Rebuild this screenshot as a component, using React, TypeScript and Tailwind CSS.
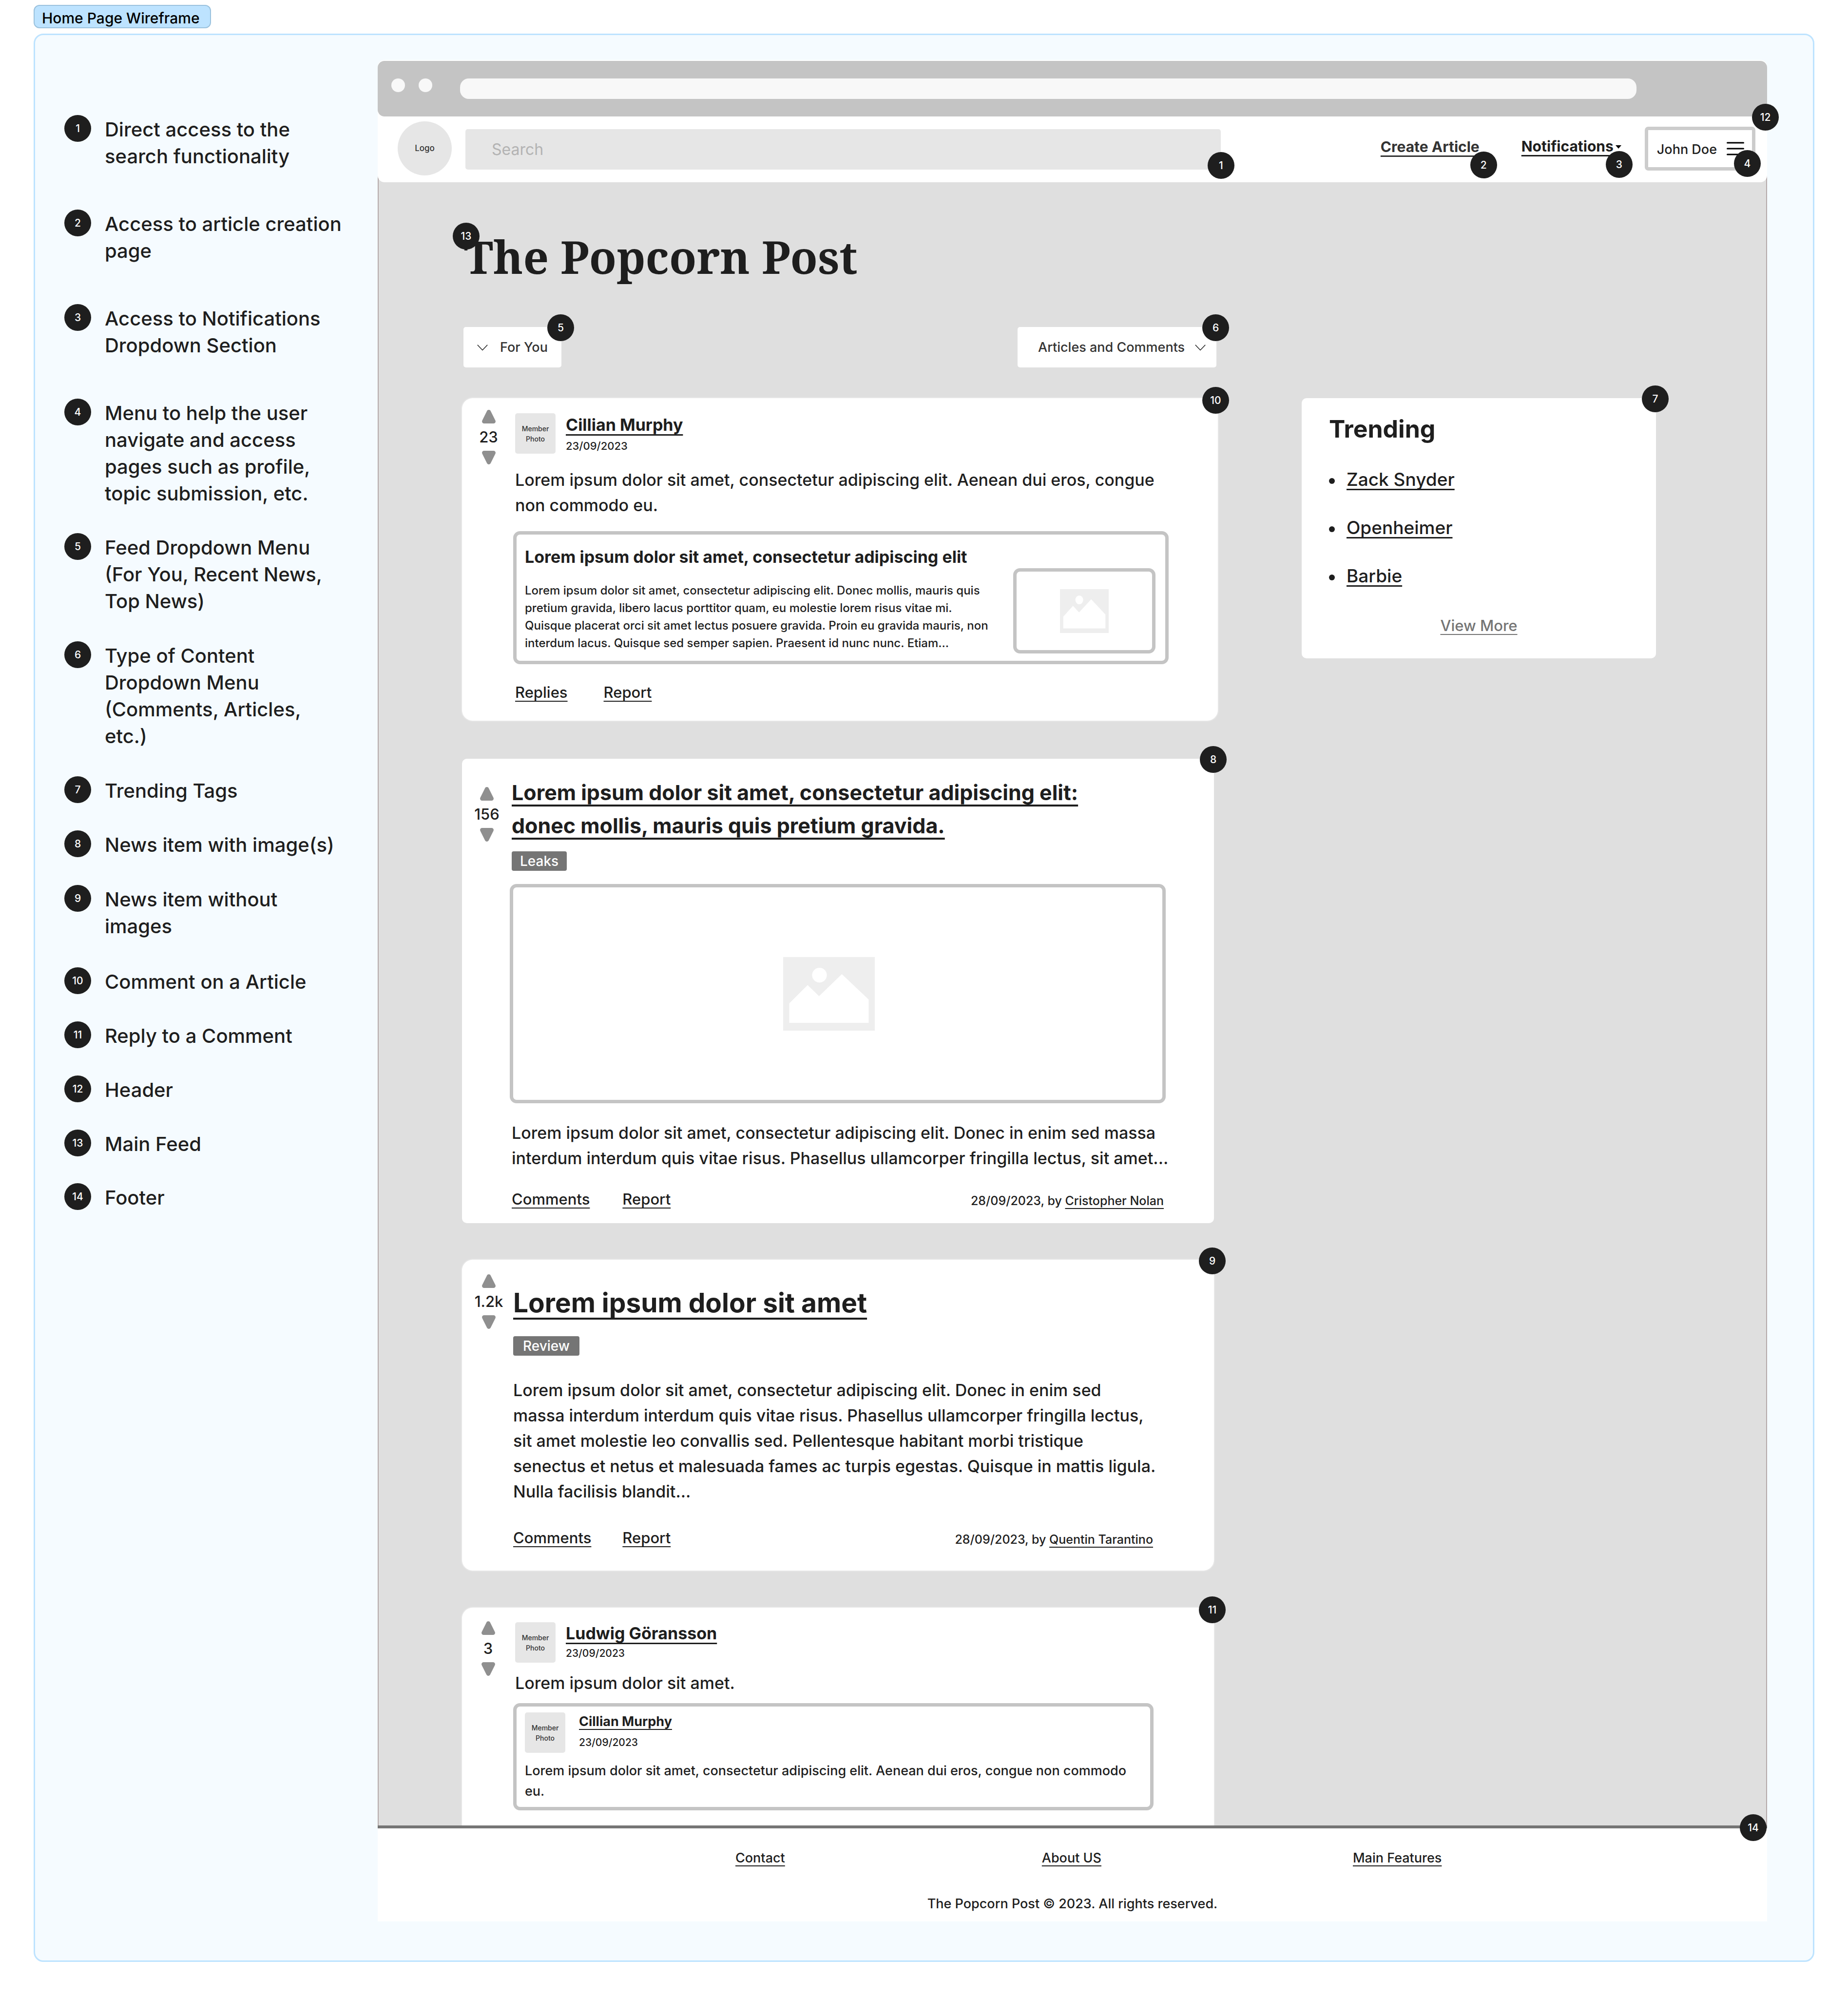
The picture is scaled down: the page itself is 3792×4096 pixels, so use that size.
import React from "react";

const underlined = "underline [text-decoration-skip-ink:none]";

function Badge({ n, className = "" }: { n: number; className?: string }) {
  return (
    <span
      className={`z-20 flex size-[55px] shrink-0 items-center justify-center rounded-full bg-[#1e1e1e] text-[21px] leading-none font-medium text-white ${className}`}
    >
      {n}
    </span>
  );
}

const legend = [
  { text: "Direct access to the search functionality", gap: "" },
  { text: "Access to article creation page", gap: "mt-[84px]" },
  { text: "Access to Notifications Dropdown Section", gap: "mt-[84px]" },
  { text: "Menu to help the user navigate and access pages such as profile, topic submission, etc.", gap: "mt-[84px]" },
  { text: "Feed Dropdown Menu (For You, Recent News, Top News)", gap: "mt-[56px]" },
  { text: "Type of Content Dropdown Menu (Comments, Articles, etc.)", gap: "mt-[57px]" },
  { text: "Trending Tags", gap: "mt-[57px]" },
  { text: "News item with image(s)", gap: "mt-[56px]" },
  { text: "News item without images", gap: "mt-[57px]" },
  { text: "Comment on a Article", gap: "mt-[59px]" },
  { text: "Reply to a Comment", gap: "mt-[56px]" },
  { text: "Header", gap: "mt-[56px]" },
  { text: "Main Feed", gap: "mt-[56px]" },
  { text: "Footer", gap: "mt-[55px]" },
];

function Legend() {
  return (
    <aside className="w-[703px] shrink-0 pt-[113px] pr-[70px] pl-[60px]">
      <ol>
        {legend.map((item, i) => (
          <li key={item.text} className={`flex gap-[28px] ${item.gap}`}>
            <Badge n={i + 1} />
            <p className="-mb-[2px] flex-1 pt-[2px] text-[40px] leading-[55px]">{item.text}</p>
          </li>
        ))}
      </ol>
    </aside>
  );
}

function Chevron({ className }: { className: string }) {
  return (
    <svg viewBox="0 0 22 13" className={`pointer-events-none absolute h-[13px] w-[22px] ${className}`} fill="none" stroke="#1e1e1e" strokeWidth="1.5">
      <path d="M0.8 0.8 L11 11.5 L21.2 0.8" />
    </svg>
  );
}

function Votes({ count, className }: { count: string; className: string }) {
  return (
    <div className={`flex shrink-0 flex-col items-center ${className}`}>
      <button aria-label="Upvote" className="block size-[28px]">
        <svg viewBox="0 0 28 28" className="size-full" fill="#8f8f8f">
          <path d="M10.2 2.4C11.7 -0.7 16.3 -0.7 17.8 2.4L27.4 21.8C28.9 24.9 27 28 23.6 28H4.4C1 28 -0.9 24.9 0.6 21.8Z" />
        </svg>
      </button>
      <span className="text-[31px] leading-[56px]">{count}</span>
      <button aria-label="Downvote" className="block size-[28px]">
        <svg viewBox="0 0 28 28" className="size-full rotate-180" fill="#8f8f8f">
          <path d="M10.2 2.4C11.7 -0.7 16.3 -0.7 17.8 2.4L27.4 21.8C28.9 24.9 27 28 23.6 28H4.4C1 28 -0.9 24.9 0.6 21.8Z" />
        </svg>
      </button>
    </div>
  );
}

function Picture({ className }: { className: string }) {
  return (
    <svg viewBox="0 0 217 175" preserveAspectRatio="none" className={className} role="img" aria-label="Image placeholder">
      <rect width="217" height="175" fill="#eeeeee" />
      <circle cx="86" cy="43" r="17.5" fill="#ffffff" />
      <path d="M14.5 110L58 66.5L85 93L139 40.5L202.5 101V156.5H14.5Z" fill="#ffffff" />
    </svg>
  );
}

function Avatar() {
  return (
    <div className="flex size-[83px] shrink-0 items-center justify-center rounded-[5px] bg-[#e6e6e6] text-center text-[14px] leading-[21px] text-[#333333]">
      <span>
        Member
        <br />
        Photo
      </span>
    </div>
  );
}

function Tag({ children, className }: { children: string; className: string }) {
  return (
    <span className={`block h-[40px] w-fit rounded-[4px] bg-[#757575] text-[28px] leading-[40px] text-white ${className}`}>
      {children}
    </span>
  );
}

function TextLink({ children, className = "" }: { children: string; className?: string }) {
  return (
    <a href="#" className={`decoration-[2px] underline-offset-[6px] ${underlined} ${className}`}>
      {children}
    </a>
  );
}

function Byline({ date, author }: { date: string; author: string }) {
  return (
    <span className="ml-auto pt-[6px] text-[25px] leading-[34px]">
      {date}, by <TextLink>{author}</TextLink>
    </span>
  );
}

function Chrome() {
  return (
    <div className="flex h-[114px] rounded-[14px] bg-[#c4c4c4] pt-[36px] pr-[268px] pl-[28px]">
      <span className="mr-[28px] size-[28px] rounded-full bg-[#f8f8f8]" />
      <span className="mr-[57px] size-[28px] rounded-full bg-[#f8f8f8]" />
      <span className="h-[42px] flex-1 rounded-[18px] bg-[#f8f8f8]" />
    </div>
  );
}

function Header() {
  return (
    <header className="relative z-10 flex h-[135px] items-start rounded-b-[14px] bg-white pr-[24px] pl-[41px]">
      <a href="#" className="mt-[10px] flex size-[111px] items-center justify-center rounded-full bg-[#e6e6e6] text-[17px] text-[#333333]">
        Logo
      </a>
      <div className="relative mt-[26px] ml-[28px] flex-1">
        <input
          type="search"
          aria-label="Search"
          placeholder="Search"
          className="h-[83px] w-full rounded-[5px] bg-[#e6e6e6] pl-[54px] text-[32px] font-normal placeholder:text-[#b3b3b3]"
        />
        <Badge n={1} className="absolute top-[47px] -right-[28px]" />
      </div>
      <a href="#" className={`relative mt-[42px] ml-[328px] text-[30px] leading-[40px] font-bold text-[#333333] decoration-[3px] underline-offset-[7px] ${underlined}`}>
        Create Article
        <Badge n={2} className="absolute top-[30px] -right-[36px]" />
      </a>
      <button className="relative mt-[41px] ml-[86px] flex text-[30px] leading-[40px] font-bold">
        <span className={`decoration-[3px] underline-offset-[7px] ${underlined}`}>Notifications</span>
        <svg viewBox="0 0 12 7" className="mt-[18px] ml-[4px] h-[7px] w-[12px]">
          <path d="M0 0H12L6 7Z" />
        </svg>
        <Badge n={3} className="absolute top-[30px] -right-[23px]" />
      </button>
      <button className="relative mt-[21px] ml-[48px] flex h-[90px] items-center gap-[20px] rounded-[7px] border-[7px] border-[#cccccc] pr-[16px] pl-[18px]">
        <span className="pt-[4px] text-[27px] leading-[36px]">John Doe</span>
        <svg viewBox="0 0 36 28" className="h-[28px] w-[36px]" stroke="#000000" strokeWidth="3" strokeLinecap="round">
          <path d="M1.5 2H34.5M1.5 14H34.5M1.5 26H34.5" />
        </svg>
        <Badge n={4} className="absolute top-[41px] -right-[18px]" />
      </button>
      <Badge n={12} className="absolute -top-[26px] -right-[24px]" />
    </header>
  );
}

function Filters() {
  return (
    <div className="mx-[3px] mt-[74px] flex justify-between text-[27px] text-[#333333]">
      <div className="relative">
        <select aria-label="Feed" className="h-[83px] w-[201px] appearance-none rounded-[5px] bg-white pt-[2px] pl-[75px]">
          <option>For You</option>
          <option>Recent News</option>
          <option>Top News</option>
        </select>
        <Chevron className="top-[36px] left-[28px]" />
        <Badge n={5} className="absolute -top-[26px] -right-[26px]" />
      </div>
      <div className="relative">
        <select aria-label="Type of content" className="h-[83px] w-[408px] appearance-none rounded-[5px] bg-white pt-[2px] pl-[42px]">
          <option>Articles and Comments</option>
          <option>Articles</option>
          <option>Comments</option>
        </select>
        <Chevron className="top-[36px] right-[22px]" />
        <Badge n={6} className="absolute -top-[26px] -right-[26px]" />
      </div>
    </div>
  );
}

function CommentCard() {
  return (
    <article className="relative mt-[63px] flex rounded-[22px] bg-white pr-[101px] pb-[38px] ring-2 ring-[#e6e6e6]">
      <Votes count="23" className="w-[109px] pt-[24px]" />
      <div className="min-w-0 flex-1">
        <div className="flex gap-[21px] pt-[31px]">
          <Avatar />
          <div className="pt-[2px]">
            <a href="#" className={`block text-[34px] leading-[44px] font-bold decoration-[3px] underline-offset-[7px] ${underlined}`}>
              Cillian Murphy
            </a>
            <p className="pt-[5px] text-[22px] leading-[32px]">23/09/2023</p>
          </div>
        </div>
        <p className="mt-[28px] text-[34px] leading-[52px]">
          Lorem ipsum dolor sit amet, consectetur adipiscing elit. Aenean dui eros, congue non commodo eu.
        </p>
        <blockquote className="mt-[27px] -ml-[4px] flex rounded-[14px] border-[7px] border-[#c4c4c4] pr-[20px] pb-[15px] pl-[17px]">
          <div className="min-w-0 flex-1 pt-[20px] pb-[3px]">
            <h3 className="text-[34px] leading-[52px] font-bold">Lorem ipsum dolor sit amet, consectetur adipiscing elit</h3>
            <p className="mt-[25px] text-[24px] leading-[36px]">
              Lorem ipsum dolor sit amet, consectetur adipiscing elit. Donec mollis, mauris quis pretium gravida, libero lacus
              porttitor quam, eu molestie lorem risus vitae mi. Quisque placerat orci sit amet lectus posuere gravida. Proin eu
              gravida mauris, non interdum lacus. Quisque sed semper sapien. Praesent id nunc nunc. Etiam...
            </p>
          </div>
          <div className="ml-[36px] flex h-[175px] w-[292px] shrink-0 items-center justify-center self-end rounded-[14px] border-[7px] border-[#c4c4c4]">
            <Picture className="h-[90px] w-[100px]" />
          </div>
        </blockquote>
        <div className="mt-[38px] flex gap-[74px] text-[31px] leading-[40px]">
          <TextLink>Replies</TextLink>
          <TextLink>Report</TextLink>
        </div>
      </div>
      <Badge n={10} className="absolute -top-[23px] -right-[23px]" />
    </article>
  );
}

function ImageNewsCard() {
  return (
    <article className="relative mt-[78px] mr-[8px] flex rounded-[10px] bg-white pr-[99px] pb-[29px]">
      <Votes count="156" className="w-[102px] pt-[58px]" />
      <div className="min-w-0 flex-1 pt-[35px]">
        <h2 className="text-[43px] leading-[68px] font-bold">
          <a href="#" className={`decoration-[4px] underline-offset-[9px] ${underlined}`}>
            Lorem ipsum dolor sit amet, consectetur adipiscing elit:
            <br />
            donec mollis, mauris quis pretium gravida.
          </a>
        </h2>
        <div className="mt-[19px]">
          <Tag className="px-[17px]">Leaks</Tag>
        </div>
        <div className="mt-[27px] -ml-[4px] flex h-[450px] items-center justify-center rounded-[14px] border-[7px] border-[#c4c4c4] pr-[36px]">
          <Picture className="h-[151px] w-[188px]" />
        </div>
        <p className="mt-[35px] -mr-[32px] text-[34px] leading-[52px]">
          Lorem ipsum dolor sit amet, consectetur adipiscing elit. Donec in enim sed massa interdum interdum quis vitae risus.
          Phasellus ullamcorper fringilla lectus, sit amet...
        </p>
        <div className="mt-[38px] mr-[4px] flex text-[31px] leading-[40px]">
          <TextLink>Comments</TextLink>
          <TextLink className="ml-[67px]">Report</TextLink>
          <Byline date="28/09/2023" author="Cristopher Nolan" />
        </div>
      </div>
      <Badge n={8} className="absolute -top-[26px] -right-[26px]" />
    </article>
  );
}

function TextNewsCard() {
  return (
    <article className="relative mt-[75px] mr-[8px] flex rounded-[22px] bg-white pr-[125px] pb-[47px] ring-2 ring-[#e6e6e6]">
      <Votes count="1.2k" className="w-[105px] pt-[30px] pl-[5px]" />
      <div className="min-w-0 flex-1 pt-[48px]">
        <h2 className="text-[55px] leading-[80px] font-bold">
          <a href="#" className={`decoration-[4px] underline-offset-[11px] ${underlined}`}>
            Lorem ipsum dolor sit amet
          </a>
        </h2>
        <div className="mt-[29px]">
          <Tag className="px-[20px]">Review</Tag>
        </div>
        <p className="mt-[45px] -mr-[16px] text-[34px] leading-[52px]">
          Lorem ipsum dolor sit amet, consectetur adipiscing elit. Donec in enim sed
          <br />
          massa interdum interdum quis vitae risus. Phasellus ullamcorper fringilla lectus,
          <br />
          sit amet molestie leo convallis sed. Pellentesque habitant morbi tristique
          <br />
          senectus et netus et malesuada fames ac turpis egestas. Quisque in mattis ligula. Nulla facilisis blandit...
        </p>
        <div className="mt-[49px] flex text-[31px] leading-[40px]">
          <TextLink>Comments</TextLink>
          <TextLink className="ml-[64px]">Report</TextLink>
          <Byline date="28/09/2023" author="Quentin Tarantino" />
        </div>
      </div>
      <Badge n={9} className="absolute -top-[25px] -right-[24px]" />
    </article>
  );
}

function ReplyCard() {
  return (
    <article className="relative mt-[76px] mr-[8px] flex rounded-t-[22px] bg-white pr-[124px] pb-[31px] ring-2 ring-[#e6e6e6]">
      <Votes count="3" className="w-[107px] pt-[28px]" />
      <div className="ml-[2px] min-w-0 flex-1">
        <div className="flex gap-[21px] pt-[30px]">
          <Avatar />
          <div className="pt-[1px]">
            <a href="#" className={`block text-[34px] leading-[44px] font-bold decoration-[3px] underline-offset-[7px] ${underlined}`}>
              Ludwig Göransson
            </a>
            <p className="pt-[3px] text-[21px] leading-[32px]">23/09/2023</p>
          </div>
        </div>
        <p className="mt-[16px] text-[34px] leading-[52px]">Lorem ipsum dolor sit amet.</p>
        <blockquote className="mt-[15px] -ml-[4px] rounded-[14px] border-[7px] border-[#c4c4c4] px-[17px] pt-[12px] pb-[11px]">
          <div className="flex gap-[28px]">
            <Avatar />
            <div className="pt-[1px]">
              <a href="#" className={`block text-[27px] leading-[36px] font-bold decoration-[2px] underline-offset-[6px] ${underlined}`}>
                Cillian Murphy
              </a>
              <p className="pt-[9px] text-[21px] leading-[32px]">23/09/2023</p>
            </div>
          </div>
          <p className="mt-[16px] text-[27px] leading-[42px]">
            Lorem ipsum dolor sit amet, consectetur adipiscing elit. Aenean dui eros, congue non commodo eu.
          </p>
        </blockquote>
      </div>
      <Badge n={11} className="absolute -top-[23px] -right-[24px]" />
    </article>
  );
}

function Trending() {
  return (
    <aside className="relative mt-[443px] self-start rounded-[10px] bg-white px-[56px] pt-[27px] pb-[47px]">
      <h2 className="text-[50px] leading-[72px] font-bold">Trending</h2>
      <ul className="mt-[44px] flex flex-col gap-[51px] text-[37px] leading-[48px]">
        {["Zack Snyder", "Openheimer", "Barbie"].map((name) => (
          <li key={name} className="flex items-center gap-[24px]">
            <span className="mt-[5px] size-[12px] rounded-full bg-[#1e1e1e]" />
            <TextLink className="decoration-[3px]">{name}</TextLink>
          </li>
        ))}
      </ul>
      <p className="mt-[58px] text-center text-[31px] leading-[40px] text-[#757575]">
        <TextLink>View More</TextLink>
      </p>
      <Badge n={7} className="absolute -top-[26px] -right-[26px]" />
    </aside>
  );
}

function Footer() {
  return (
    <footer className="relative border-t-[6px] border-[#757575] bg-white pt-[43px] pb-[18px] text-[27px] leading-[36px]">
      <nav className="flex pl-[734px]">
        <TextLink>Contact</TextLink>
        <TextLink className="ml-[527px]">About US</TextLink>
        <TextLink className="ml-[516px]">Main Features</TextLink>
      </nav>
      <p className="mt-[58px] text-center">The Popcorn Post © 2023. All rights reserved.</p>
      <Badge n={14} className="absolute -top-[29px] right-[1px]" />
    </footer>
  );
}

export default function App() {
  return (
    <div className="min-h-screen bg-white px-[69px] pt-[10px] pb-[69px] font-['Inter',sans-serif] font-medium text-[#1e1e1e]">
      <h1 className="h-[48px] w-fit rounded-[12px] border-2 border-[#9ac1dd] bg-[#bde3ff] px-[15px] pt-[5px] pr-[21px] text-[30px] leading-[40px] text-black">
        Home Page Wireframe
      </h1>
      <section className="mt-[11px] flex items-start rounded-[20px] border-[3px] border-[#bde3ff] bg-[#f5fbff] pt-[51px] pr-[94px] pb-[80px]">
        <Legend />
        <div className="min-w-0 flex-1 rounded-t-[14px] border-t-2 border-white bg-white">
          <Chrome />
          <Header />
          <main className="-mt-[14px] grid grid-cols-[1551fr_727fr] gap-x-[172px] border-x-2 border-[#b5aaaa] bg-[#dfdfdf] pt-[14px] pr-[226px] pl-[171px]">
            <div className="min-w-0">
              <h2 className="relative mt-[83px] font-['Noto_Serif','Liberation_Serif',serif] text-[92px] leading-[140px] font-bold">
                <span className="pl-[4px]">The Popcorn Post</span>
                <Badge n={13} className="absolute top-0 -left-[19px] font-['Inter',sans-serif]" />
              </h2>
              <Filters />
              <CommentCard />
              <ImageNewsCard />
              <TextNewsCard />
              <ReplyCard />
            </div>
            <Trending />
          </main>
          <Footer />
        </div>
      </section>
    </div>
  );
}
